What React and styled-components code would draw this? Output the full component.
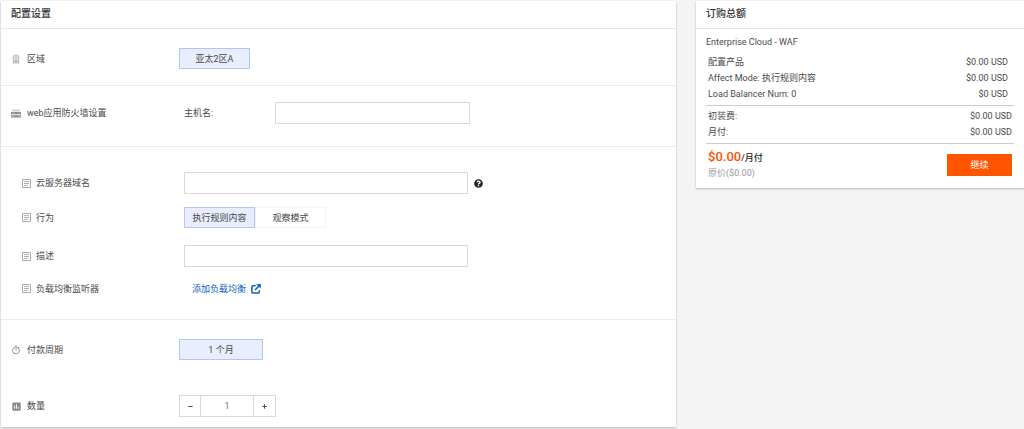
import { useState } from 'react';
import styled, { createGlobalStyle } from 'styled-components';
import { FaQuestionCircle, FaMinus, FaPlus } from 'react-icons/fa';
import { MdOutlineTimer, MdAssessment } from 'react-icons/md';

const GlobalStyles = createGlobalStyle`
  * {
    box-sizing: border-box;
  }
  body {
    margin: 0;
    background: #f4f4f4;
    color: #4a4a4a;
    font: 9px/16px Roboto, 'Noto Sans CJK SC', sans-serif;
  }
  button, input {
    font: inherit;
    color: inherit;
    margin: 0;
  }
`;

const costs = [
  { name: '配置产品', price: '$0.00 USD' },
  { name: 'Affect Mode: 执行规则内容', price: '$0.00 USD' },
  { name: 'Load Balancer Num: 0', price: '$0 USD' },
];

const totals = [
  { name: '初装费:', price: '$0.00 USD' },
  { name: '月付:', price: '$0.00 USD' },
];

const modes = ['执行规则内容', '观察模式'];

const RegionIcon = () => (
  <svg width='8' height='10' viewBox='0 0 8 10' fill='none' stroke='#999' aria-hidden='true'>
    <circle cx='4' cy='3.8' r='3' strokeWidth='0.8' />
    <circle cx='4' cy='3.8' r='1.3' strokeWidth='0.7' />
    <path d='M2.2 6.4L.8 8.9h6.4L5.8 6.4M2.6 7.4h2.8' strokeWidth='0.8' />
  </svg>
);

const FirewallIcon = () => (
  <svg width='10' height='9' viewBox='0 0 10 9' aria-hidden='true'>
    <path d='M1 .5h8l.5 2h-9z' fill='#d5d5d5' />
    <path d='M0 3h10v2.3H0zM0 6.2h10v2.3H0z' fill='#888' />
    <path d='M1 4.1h3M7 4.1h2M1 7.3h3M7 7.3h2' stroke='#ccc' strokeWidth='0.6' />
  </svg>
);

const FormIcon = () => (
  <svg width='9' height='9' viewBox='0 0 9 9' fill='none' stroke='#999' aria-hidden='true'>
    <path d='M.5.5h8v8h-8z' stroke='#aaa' />
    <path d='M2 2.6h5M2 4.5h5M2 6.4h4' strokeWidth='0.8' />
  </svg>
);

const OpenIcon = () => (
  <svg width='10' height='10' viewBox='0 0 10 10' fill='none' stroke='currentColor' aria-hidden='true'>
    <path d='M4.6 1.7H2Q.9 1.7.9 2.8V8Q.9 9.1 2 9.1h5.2Q8.3 9.1 8.3 8V6.2' strokeWidth='1.5' />
    <path d='M4 6L8.2 1.8' strokeWidth='1.6' />
    <path d='M5.4 0h4.4v4.4z' fill='currentColor' stroke='none' />
  </svg>
);

function App() {
  const [mode, setMode] = useState(modes[0]);
  const [count, setCount] = useState(1);

  return (
    <Page>
      <GlobalStyles />
      <Panel>
        <Title>配置设置</Title>
        <Section $top={19} $bottom={16}>
          <Row>
            <Label as='span'><RegionIcon />区域</Label>
            <Choice type='button' $active>亚太2区A</Choice>
          </Row>
        </Section>
        <Section $top={16} $bottom={22}>
          <Row>
            <Label as='span'><FirewallIcon />web应用防火墙设置</Label>
            <HostField>
              <label htmlFor='host'>主机名:</label>
              <TextBox id='host' type='text' $width={195} />
            </HostField>
          </Row>
        </Section>
        <Section $top={25} $bottom={20}>
          <Row $nested>
            <Label htmlFor='domain' $nested><FormIcon />云服务器域名</Label>
            <Field>
              <TextBox id='domain' type='text' $width={284} />
              <FaQuestionCircle size={9} color='#222' />
            </Field>
          </Row>
          <Row $nested $space={13}>
            <Label as='span' $nested><FormIcon />行为</Label>
            <div>
              <Modes>
                {modes.map((item) => (
                  <Choice key={item} type='button' $active={item === mode} onClick={() => setMode(item)}>
                    {item}
                  </Choice>
                ))}
              </Modes>
            </div>
          </Row>
          <Row $nested $space={17}>
            <Label htmlFor='desc' $nested><FormIcon />描述</Label>
            <TextBox id='desc' type='text' $width={284} />
          </Row>
          <Row $nested $space={11}>
            <Label as='span' $nested><FormIcon />负载均衡监听器</Label>
            <AddLink href='#balancer'>添加负载均衡<OpenIcon /></AddLink>
          </Row>
        </Section>
        <Section $top={19} $bottom={10}>
          <Row>
            <Label as='span'><MdOutlineTimer size={10} color='#888' />付款周期</Label>
            <Choice type='button' $active $wide>1 个月</Choice>
          </Row>
          <Row $space={35}>
            <Label htmlFor='count'><MdAssessment size={11} color='#888' />数量</Label>
            <Stepper>
              <button type='button' aria-label='-' onClick={() => setCount(Math.max(1, count - 1))}>
                <FaMinus size={5} />
              </button>
              <input id='count' type='text' value={count} onChange={(e) => setCount(Number(e.target.value) || 1)} />
              <button type='button' aria-label='+' onClick={() => setCount(count + 1)}>
                <FaPlus size={5} />
              </button>
            </Stepper>
          </Row>
        </Section>
      </Panel>

      <Panel>
        <Title>订购总额</Title>
        <Summary>
          <Product>Enterprise Cloud - WAF</Product>
          <CostList $inset>
            {costs.map((cost) => (
              <Cost key={cost.name}><span>{cost.name}</span><span>{cost.price}</span></Cost>
            ))}
          </CostList>
          <CostList>
            {totals.map((cost) => (
              <Cost key={cost.name}><span>{cost.name}</span><span>{cost.price}</span></Cost>
            ))}
          </CostList>
          <Checkout>
            <div>
              <Price><strong>$0.00</strong>/月付</Price>
              <OldPrice>原价($0.00)</OldPrice>
            </div>
            <Continue type='button'>继续</Continue>
          </Checkout>
        </Summary>
      </Panel>
    </Page>
  );
}

const Page = styled.main`
  display: grid;
  grid-template-columns: minmax(0, 675fr) minmax(0, 328fr);
  align-items: start;
  gap: 20px;
  padding: 1px 0 2px 1px;
`;

const Panel = styled.section`
  background: #fff;
  box-shadow: 0 1px 2px rgba(0, 0, 0, 0.25);
`;

const Title = styled.h2`
  margin: 0;
  padding: 5px 10px 6px;
  font-size: 10px;
  line-height: 16px;
  font-weight: 500;
  color: #333;
  border-bottom: 1px solid #e8e8e8;
`;

const Section = styled.div`
  padding: ${(p) => p.$top}px 10px ${(p) => p.$bottom}px;
  & + & {
    border-top: 1px solid #ebebeb;
  }
`;

const Row = styled.div`
  display: grid;
  grid-template-columns: ${(p) => (p.$nested ? '162px' : '168px')} minmax(0, 1fr);
  align-items: center;
  justify-items: start;
  min-height: 21px;
  margin-top: ${(p) => p.$space || 0}px;
  padding-left: ${(p) => (p.$nested ? 11 : 0)}px;
`;

const Label = styled.label`
  display: grid;
  grid-template-columns: ${(p) => (p.$nested ? '9px' : '10px')} auto;
  align-items: center;
  justify-items: center;
  gap: ${(p) => (p.$nested ? 5 : 6)}px;
`;

const Field = styled.div`
  display: flex;
  align-items: center;
  gap: 6px;
`;

const HostField = styled.div`
  display: grid;
  grid-template-columns: 91px auto;
  align-items: center;
  padding-left: 5px;
`;

const TextBox = styled.input`
  width: ${(p) => p.$width}px;
  max-width: 100%;
  height: 22px;
  padding: 0 6px;
  border: 1px solid #d8d8d8;
  background: #fff;
`;

const Choice = styled.button`
  width: ${(p) => (p.$wide ? 84 : 71)}px;
  height: 21px;
  padding: 0;
  line-height: 16px;
  white-space: nowrap;
  border: 1px solid ${(p) => (p.$active ? '#b5c4f7' : '#f4f4f4')};
  background: ${(p) => (p.$active ? '#e8eefd' : '#fff')};
`;

const Modes = styled.div`
  display: flex;
`;

const AddLink = styled.a`
  display: flex;
  align-items: center;
  gap: 5px;
  padding-left: 8px;
  color: #0b5fc0;
  text-decoration: none;
`;

const Stepper = styled.div`
  display: grid;
  grid-template-columns: 20px 54px 21px;
  height: 22px;
  border: 1px solid #d8d8d8;
  button {
    display: grid;
    place-items: center;
    padding: 0;
    border: 0;
    background: #fff;
  }
  input {
    width: 100%;
    padding: 0;
    border: solid #d8d8d8;
    border-width: 0 1px;
    text-align: center;
    color: #777;
  }
`;

const Summary = styled.div`
  padding: 5px 10px 7px;
`;

const Product = styled.p`
  margin: 0 0 4px;
`;

const CostList = styled.ul`
  margin: 0;
  padding: 0 ${(p) => (p.$inset ? 6 : 2)}px 3px 2px;
  list-style: none;
  border-bottom: 1px solid #ccc;
  & + & {
    padding-top: 2px;
  }
`;

const Cost = styled.li`
  display: flex;
  justify-content: space-between;
`;

const Checkout = styled.div`
  display: flex;
  justify-content: space-between;
  align-items: center;
  padding: 5px 2px 0;
`;

const Price = styled.div`
  height: 16px;
  color: #222;
  font-weight: 500;
  strong {
    font-size: 13px;
    font-weight: 500;
    color: #ff5400;
  }
`;

const OldPrice = styled.div`
  color: #999;
`;

const Continue = styled.button`
  width: 65px;
  height: 22px;
  padding: 0;
  border: 0;
  background: #ff5400;
  color: #fff;
`;

export default App;
